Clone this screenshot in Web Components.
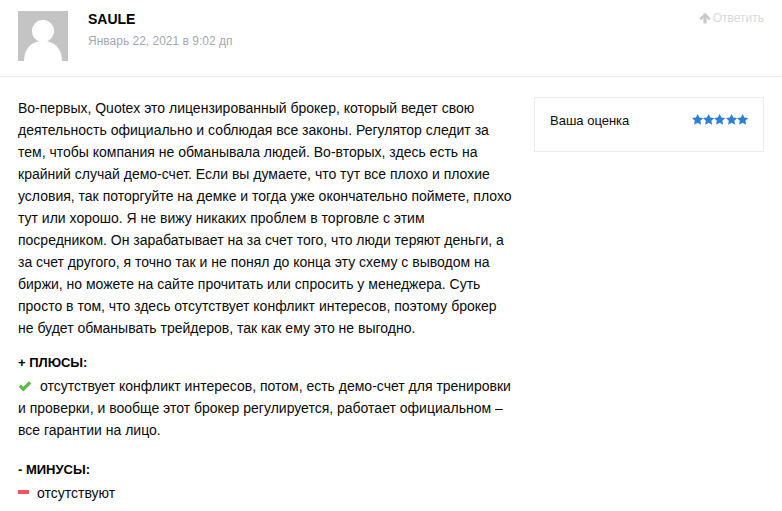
<!DOCTYPE html>
<html lang="ru">
<head>
<meta charset="utf-8">
<title>Отзыв</title>
<style>
  html, body { margin: 0; padding: 0; background: #fff; }
  body { font-family: "Liberation Sans", Arial, sans-serif; color: #0a0a0a; overflow: hidden; }
</style>
</head>
<body>
<review-card>
  <review-header slot="header" name="SAULE" date="Январь 22, 2021 в 9:02 дп"></review-header>
  <review-text>
    <p>Во-первых, Quotex это лицензированный брокер, который ведет свою деятельность официально и соблюдая все законы. Регулятор следит за тем, чтобы компания не обманывала людей. Во-вторых, здесь есть на крайний случай демо-счет. Если вы думаете, что тут все плохо и плохие условия, так поторгуйте на демке и тогда уже окончательно поймете, плохо тут или хорошо. Я не вижу никаких проблем в торговле с этим посредником. Он зарабатывает на за счет того, что люди теряют деньги, а за счет другого, я точно так и не понял до конца эту схему с выводом на биржи, но можете на сайте прочитать или спросить у менеджера. Суть просто в том, что здесь отсутствует конфликт интересов, поэтому брокер не будет обманывать трейдеров, так как ему это не выгодно.</p>
    <pros-cons kind="plus" title="+ ПЛЮСЫ:">отсутствует конфликт интересов, потом, есть демо-счет для тренировки и проверки, и вообще этот брокер регулируется, работает официальном – все гарантии на лицо.</pros-cons>
    <pros-cons kind="minus" title="- МИНУСЫ:">отсутствуют</pros-cons>
  </review-text>
  <rating-box slot="side" label="Ваша оценка"></rating-box>
</review-card>

<script>
// card: header on top, text on the left, rating on the right
const templateCard = document.createElement("template");
templateCard.innerHTML = `
  <style>
    :host { display: block; }
    .top { border-bottom: 1px solid #ececec; }
    .main {
      display: flex;
      align-items: flex-start;
      gap: 20px;
      padding: 20px 18px 0 18px;
    }
    .text { width: 496px; flex: none; }
    .side { flex: 1; }
  </style>
  <div class="top"><slot name="header"></slot></div>
  <div class="main">
    <div class="text"><slot></slot></div>
    <div class="side"><slot name="side"></slot></div>
  </div>
`;

class ReviewCard extends HTMLElement {
  constructor() {
    super();
    this.attachShadow({ mode: "open" });
    this.shadowRoot.appendChild(templateCard.content.cloneNode(true));
  }
}

const templateHeader = document.createElement("template");
templateHeader.innerHTML = `
  <style>
    :host { display: block; }
    .row {
      display: flex;
      align-items: flex-start;
      height: 76px;
      box-sizing: border-box;
      padding: 11px 18px 0;
    }
    svg { width: 50px; height: 50px; display: block; flex: none; }
    .who { margin-left: 20px; flex: 1; }
    .name { font-size: 14px; font-weight: 700; line-height: 16px; color: #000; }
    .date { font-size: 12px; line-height: 14px; color: #a3a9b0; margin-top: 7px; }
    .reply { display: flex; align-items: center; gap: 2px; font-size: 12px; line-height: 14px; color: #d9d9d9; }
    .reply svg { width: 12px; height: 12px; }
  </style>
  <div class="row">
    <svg viewBox="0 0 50 50" aria-hidden="true">
      <rect width="50" height="50" fill="#c4c4c4"/>
      <circle cx="25" cy="20" r="11" fill="#fff"/>
      <path d="M6 50C6 38 13 30 25 30S44 38 44 50Z" fill="#fff"/>
    </svg>
    <div class="who">
      <div class="name"></div>
      <div class="date"></div>
    </div>
    <div class="reply">
      <svg viewBox="0 0 12 12" aria-hidden="true"><path d="M6 .8 11.8 6.4 9.9 8.2 7.6 6V11.6H4.4V6L2.1 8.2 .2 6.4Z" fill="#c9c9c9"/></svg>
      <span>Ответить</span>
    </div>
  </div>
`;

class ReviewHeader extends HTMLElement {
  constructor() {
    super();
    this.attachShadow({ mode: "open" });
    this.shadowRoot.appendChild(templateHeader.content.cloneNode(true));
  }

  connectedCallback() {
    this.shadowRoot.querySelector(".name").textContent = this.getAttribute("name");
    this.shadowRoot.querySelector(".date").textContent = this.getAttribute("date");
  }
}

const templateText = document.createElement("template");
templateText.innerHTML = `
  <style>
    :host { display: block; font-size: 14px; line-height: 22px; }
    ::slotted(p) { margin: 0 0 13px; }
  </style>
  <slot></slot>
`;

class ReviewText extends HTMLElement {
  constructor() {
    super();
    this.attachShadow({ mode: "open" });
    this.shadowRoot.appendChild(templateText.content.cloneNode(true));
  }
}

const templatePros = document.createElement("template");
templatePros.innerHTML = `
  <style>
    :host { display: block; margin-bottom: 18px; }
    .title { font-weight: 700; font-size: 13px; color: #000; margin-bottom: 1px; }
    .mark { display: inline-block; vertical-align: middle; }
    .plus { width: 14px; height: 11px; margin-right: 8px; position: relative; top: -1px; }
    .minus { width: 11px; height: 4px; background: #f4555f; margin-right: 8px; position: relative; top: -2px; }
  </style>
  <div class="title"></div>
  <div class="body"><span class="slot-mark"></span><slot></slot></div>
`;

class ProsCons extends HTMLElement {
  constructor() {
    super();
    this.attachShadow({ mode: "open" });
    this.shadowRoot.appendChild(templatePros.content.cloneNode(true));
  }

  connectedCallback() {
    this.shadowRoot.querySelector(".title").textContent = this.getAttribute("title");
    const holder = this.shadowRoot.querySelector(".slot-mark");
    if (this.getAttribute("kind") === "plus") {
      holder.innerHTML = `<svg class="mark plus" viewBox="0 0 14 11" aria-hidden="true"><path d="M.8 5.8 3 3.6 5.2 5.8 11 .2 13.4 2.4 5.2 10.6Z" fill="#5cbb4a"/></svg>`;
    } else {
      holder.innerHTML = `<span class="mark minus"></span>`;
    }
  }
}

const templateRating = document.createElement("template");
templateRating.innerHTML = `
  <style>
    :host { display: block; }
    .box {
      display: flex;
      justify-content: space-between;
      align-items: flex-start;
      height: 55px;
      box-sizing: border-box;
      border: 1px solid #ececec;
      padding: 15px 15px 0;
      font-size: 13px;
      line-height: 16px;
      color: #0a0a0a;
    }
    .stars { display: flex; margin-top: 1px; }
    svg { width: 11.2px; height: 11.2px; display: block; }
  </style>
  <div class="box">
    <span class="label"></span>
    <span class="stars"></span>
  </div>
`;

class RatingBox extends HTMLElement {
  constructor() {
    super();
    this.attachShadow({ mode: "open" });
    this.shadowRoot.appendChild(templateRating.content.cloneNode(true));
  }

  connectedCallback() {
    this.shadowRoot.querySelector(".label").textContent = this.getAttribute("label");
    const star = `<svg viewBox="0 0 24 24" aria-hidden="true"><path d="M12 0l3.7 7.6 8.3 1.1-6 5.8 1.5 8.3-7.5-4-7.5 4L6 14.5 0 8.7l8.3-1.1z" fill="#2b7fd9"/></svg>`;
    this.shadowRoot.querySelector(".stars").innerHTML = star.repeat(5);
  }
}

window.customElements.define("review-card", ReviewCard);
window.customElements.define("review-header", ReviewHeader);
window.customElements.define("review-text", ReviewText);
window.customElements.define("pros-cons", ProsCons);
window.customElements.define("rating-box", RatingBox);
</script>
</body>
</html>
